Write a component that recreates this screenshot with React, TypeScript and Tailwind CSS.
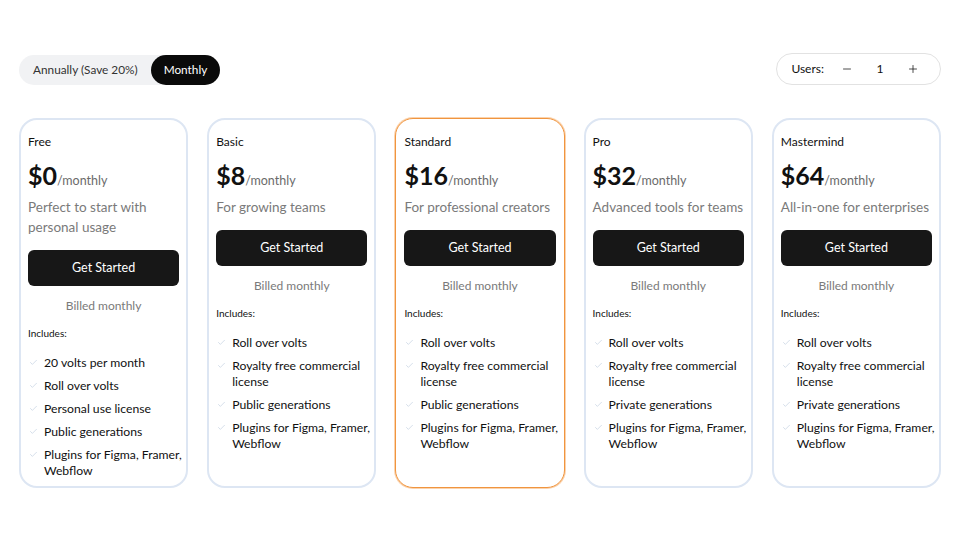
import { Check, Minus, Plus } from 'lucide-react';

type Plan = {
  name: string;
  price: string;
  desc: string;
  features: string[];
  highlight?: boolean;
};

const plans: Plan[] = [
  {
    name: 'Free',
    price: '$0',
    desc: 'Perfect to start with personal usage',
    features: ['20 volts per month', 'Roll over volts', 'Personal use license', 'Public generations', 'Plugins for Figma, Framer, Webflow'],
  },
  {
    name: 'Basic',
    price: '$8',
    desc: 'For growing teams',
    features: ['Roll over volts', 'Royalty free commercial license', 'Public generations', 'Plugins for Figma, Framer, Webflow'],
  },
  {
    name: 'Standard',
    price: '$16',
    desc: 'For professional creators',
    features: ['Roll over volts', 'Royalty free commercial license', 'Public generations', 'Plugins for Figma, Framer, Webflow'],
    highlight: true,
  },
  {
    name: 'Pro',
    price: '$32',
    desc: 'Advanced tools for teams',
    features: ['Roll over volts', 'Royalty free commercial license', 'Private generations', 'Plugins for Figma, Framer, Webflow'],
  },
  {
    name: 'Mastermind',
    price: '$64',
    desc: 'All-in-one for enterprises',
    features: ['Roll over volts', 'Royalty free commercial license', 'Private generations', 'Plugins for Figma, Framer, Webflow'],
  },
];

const PlanCard = ({ plan }: { plan: Plan }) => (
  <div
    className={`rounded-[18px] bg-white ${
      plan.highlight
        ? 'border border-[#f0953f] shadow-[0_0_0_1px_#fbd3ad] px-[8px] pt-[15px] pb-[6px]'
        : 'border-2 border-[#dde6f3] px-[7px] pt-[14px] pb-[5px]'
    }`}
  >
    <div className="text-[12px] leading-[16px] text-[#111]">{plan.name}</div>
    <div className="mt-[9px] flex items-baseline">
      <span className="text-[25px] leading-[32px] font-bold text-[#111]">{plan.price}</span>
      <span className="text-[12.5px] text-[#6b6b6b]">/monthly</span>
    </div>
    <p className="mt-[6px] text-[13.5px] leading-[20px] text-[#7a7a7a]">{plan.desc}</p>
    <button className="mt-[13px] w-full h-[36px] rounded-[6px] bg-[#171717] text-white text-[12.5px]">
      Get Started
    </button>
    <div className="mt-[10px] text-center text-[12px] leading-[20px] text-[#7a7a7a]">Billed monthly</div>
    <div className="mt-[10px] text-[10px] leading-[14px] text-[#111]">Includes:</div>
    <ul className="mt-[15px] mr-[-6px] flex flex-col gap-[7px]">
      {plan.features.map((f) => (
        <li key={f} className="flex items-start gap-[6px]">
          <Check className="mt-[3px] ml-[1px] w-[9px] h-[9px] shrink-0 text-[#a9bdd4]" strokeWidth={1.3} />
          <span className="text-[12.2px] leading-[16px] text-[#111]">{f}</span>
        </li>
      ))}
    </ul>
  </div>
);

export default function App() {
  return (
    <div className="w-[960px] h-[540px] bg-white px-[19px] pt-[53px] font-['Lato','Segoe_UI',sans-serif] text-[#111]">
      <div className="flex items-center justify-between">
        <div className="flex items-center h-[30px] mt-[1px] rounded-full bg-[#f1f2f4]">
          <button className="h-full pl-[14px] pr-[13px] text-[11.8px] text-[#333]">Annually (Save 20%)</button>
          <button className="h-full px-[13px] rounded-full bg-[#0a0a0a] text-white text-[11.8px]">Monthly</button>
        </div>
        <div className="flex items-center h-[32px] rounded-full border border-[#e2e2e2] pl-[14px] pr-[21px] text-[12px]">
          <span>Users:</span>
          <Minus className="ml-[17px] w-[12px] h-[12px]" strokeWidth={1.5} />
          <span className="w-[54px] text-center">1</span>
          <Plus className="w-[12px] h-[12px]" strokeWidth={1.5} />
        </div>
      </div>
      <div className="mt-[33px] grid grid-cols-5 gap-[19px] h-[370px]">
        {plans.map((p) => (
          <PlanCard key={p.name} plan={p} />
        ))}
      </div>
    </div>
  );
}
